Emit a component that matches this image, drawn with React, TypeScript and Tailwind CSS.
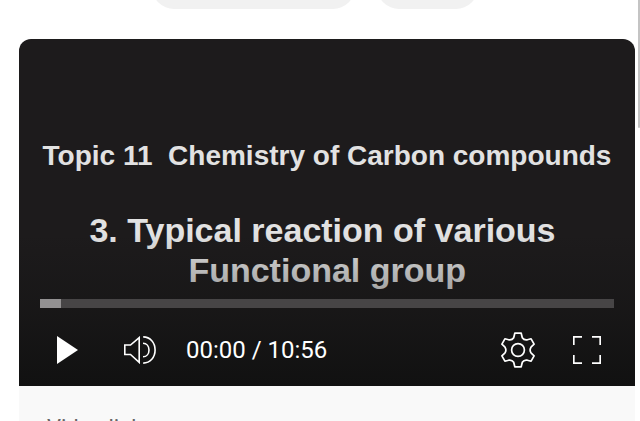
import { useState } from "react";

function PlayIcon() {
  return (
    <svg viewBox="0 0 21 28" className="h-7 w-[21px]" fill="#fff" aria-hidden="true">
      <path d="M0 0 21 14 0 28Z" />
    </svg>
  );
}

function VolumeIcon() {
  return (
    <svg viewBox="0 0 32 28" className="h-7 w-8" fill="none" stroke="#fff" strokeWidth="1.6" aria-hidden="true">
      <path d="M0.8 9H6.5L15.2 1.6V26.4L6.5 18.5H0.8Z" />
      <path d="M19 7.2C22.6 7.2 25 10.2 25 14C25 17.8 22.6 20.8 19 20.8" />
      <path d="M19.2 0.9C26.3 0.9 31.1 6.8 31.1 14C31.1 21.2 26.3 27.1 19.2 27.1" />
    </svg>
  );
}

function GearIcon() {
  return (
    <svg viewBox="0 0 34 36" className="h-9 w-[34px]" fill="none" stroke="#fff" strokeWidth="1.7" strokeLinejoin="round" aria-hidden="true">
      <path d="M13.8 1.2H20.2L21.3 5.7Q23 8.4 26.3 7.8L30.1 6.8L33.1 12.2L30 15.2Q28.2 18 30 20.8L33.1 23.8L30.1 29.2L26.3 28.2Q23 27.6 21.3 30.3L20.2 34.8H13.8L12.7 30.3Q11 27.6 7.7 28.2L3.9 29.2L0.9 23.8L4 20.8Q5.8 18 4 15.2L0.9 12.2L3.9 6.8L7.7 7.8Q11 8.4 12.7 5.7Z" />
      <circle cx="17" cy="18" r="6.4" />
    </svg>
  );
}

function FullscreenIcon() {
  return (
    <svg viewBox="0 0 28 28" className="size-7" fill="none" stroke="#fff" strokeWidth="1.7" aria-hidden="true">
      <path d="M0.8 9V0.8H9M19 0.8H27.2V9M27.2 19V27.2H19M9 27.2H0.8V19" />
    </svg>
  );
}

function VideoPlayer() {
  const [position, setPosition] = useState(0);
  return (
    <section className="relative flex flex-col overflow-hidden rounded-t-xl bg-[#1d1b1c]" aria-label="Video player">
      <div className="whitespace-pre pt-[97px] pb-[9px] text-center font-['Liberation_Sans',Arial,sans-serif] leading-10 font-bold text-[#e2e2e2]">
        <h1 className="text-[28px] leading-10">{"Topic 11  Chemistry of Carbon compounds"}</h1>
        <h2 className="pt-[34px] pr-[9px] text-[34px] leading-10">{"3. Typical reaction of various\n Functional group"}</h2>
      </div>
      <div className="pointer-events-none absolute inset-x-0 bottom-0 h-38 bg-linear-to-b from-[#111]/0 via-[#111]/40 to-[#111]" />
      <div className="relative px-[21px]">
        <input
          type="range"
          aria-label="Seek"
          min={0}
          max={656}
          value={position}
          onChange={(e) => setPosition(Number(e.target.value))}
          className="block h-[9px] w-full appearance-none bg-linear-to-r from-[#939192] from-[21px] to-[#474546] to-[21px] [&::-webkit-slider-thumb]:size-0 [&::-webkit-slider-thumb]:appearance-none"
        />
      </div>
      <div className="relative flex items-center pt-6 pr-[34px] pb-[18px] pl-[38px]">
        <button type="button" aria-label="Play"><PlayIcon /></button>
        <button type="button" aria-label="Mute" className="ml-[46px]"><VolumeIcon /></button>
        <span className="ml-[30px] font-[Roboto,sans-serif] text-2xl leading-7 text-white">00:00 / 10:56</span>
        <button type="button" aria-label="Settings" className="ml-auto"><GearIcon /></button>
        <button type="button" aria-label="Full screen" className="ml-[38px]"><FullscreenIcon /></button>
      </div>
    </section>
  );
}

export default function App() {
  return (
    <div className="flex h-screen overflow-hidden bg-white">
      <main className="min-w-0 flex-1 pr-[3px] pl-[19px]">
        <nav className="-mt-[35px] flex gap-[22px] pl-[133px]" aria-label="Filters">
          <button type="button" aria-label="Category" className="h-11 w-[203px] rounded-full bg-[#f1f1f1]" />
          <button type="button" aria-label="More" className="h-11 w-[101px] rounded-full bg-[#f1f1f1]" />
        </nav>
        <article className="mt-[30px] bg-[#f9f9f9]">
          <div className="bg-white"><VideoPlayer /></div>
          <div className="px-7 pt-[26px] pb-8">
            <p className="font-[Roboto,sans-serif] text-[22px] leading-8 text-[#666]">Video link</p>
          </div>
        </article>
      </main>
      <div className="h-32 w-0.5 rounded-b-full bg-[#c4c4c4]" />
    </div>
  );
}
